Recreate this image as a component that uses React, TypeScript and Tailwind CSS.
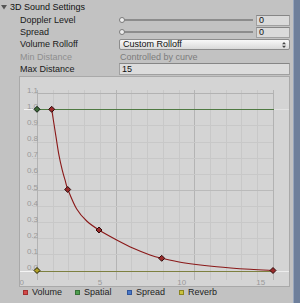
import React from "react";

const X = (d: number) => 17 + 15.73 * d;
const Y = (v: number) => 193.5 - 161.2 * v;

type P = [number, number];

const curvePage: P[] = [
  [51.7, 109.3],
  [55.9, 136.2],
  [59.0, 155.4],
  [62.2, 169.8],
  [65.3, 180.9],
  [67.7, 189],
  [76.7, 209],
  [86.7, 221],
  [99, 230],
  [116.7, 240],
  [133.3, 248.3],
  [150, 255],
  [161.7, 258.3],
  [183.3, 262.7],
  [216.7, 266.7],
  [250, 269.3],
  [273, 270.5],
];
const keysPage: P[] = [
  [51.7, 109.3],
  [67.7, 189.5],
  [99, 230],
  [161.7, 258.3],
  [273, 270.5],
];

const toSvg = (p: P): P => [p[0] - 20, p[1] - 77];

function catmull(pts: P[]) {
  let d = `M${pts[0][0].toFixed(2)},${pts[0][1].toFixed(2)}`;
  for (let i = 0; i < pts.length - 1; i++) {
    const p0 = pts[i - 1] || pts[i];
    const p1 = pts[i];
    const p2 = pts[i + 1];
    const p3 = pts[i + 2] || p2;
    const c1x = p1[0] + (p2[0] - p0[0]) / 6;
    const c1y = p1[1] + (p2[1] - p0[1]) / 6;
    const c2x = p2[0] - (p3[0] - p1[0]) / 6;
    const c2y = p2[1] - (p3[1] - p1[1]) / 6;
    d += ` C${c1x.toFixed(2)},${c1y.toFixed(2)} ${c2x.toFixed(2)},${c2y.toFixed(2)} ${p2[0].toFixed(2)},${p2[1].toFixed(2)}`;
  }
  return d;
}

function Diamond({ x, y, fill, stroke }: { x: number; y: number; fill: string; stroke: string }) {
  const r = 3;
  return (
    <polygon
      points={`${x},${y - r} ${x + r},${y} ${x},${y + r} ${x - r},${y}`}
      fill={fill}
      stroke={stroke}
      strokeWidth={1}
    />
  );
}

function NumberField({ value }: { value: string }) {
  return (
    <div className="ml-[3px] w-[34px] h-[11px] bg-[#dadada] border border-[#a0a0a0] border-t-[#868686] flex items-center pl-[2px] text-[9px] leading-none text-[#111]">
      {value}
    </div>
  );
}

function SliderRow({ label }: { label: string }) {
  return (
    <div className="h-[12px] flex items-center">
      <div className="w-[119px] pl-[20px] text-[9px] leading-none text-[#1a1a1a]">{label}</div>
      <div className="relative w-[134px] h-[12px]">
        <div className="absolute left-[3px] right-0 top-[5px] h-[2px] bg-[#8c8c8c]" />
        <div className="absolute left-0 top-[3px] w-[6px] h-[6px] rounded-full bg-[#ededed] border border-[#7a7a7a]" />
      </div>
      <NumberField value="0" />
    </div>
  );
}

function Chart() {
  const r = (v: number) => Math.round(v) + 0.5;
  const hLines = Array.from({ length: 12 }, (_, k) => k);
  const vLines = Array.from({ length: 16 }, (_, d) => d);
  const yLabels = ["0.0", "0.1", "0.2", "0.3", "0.4", "0.5", "0.6", "0.7", "0.8", "0.9", "1.0", "1.1"];
  const xLabels: [string, number][] = [
    ["0", 1.7],
    ["5", 80],
    ["10", 161.7],
    ["15", 240.7],
  ];
  const curve = catmull(curvePage.map(toSvg));
  const keys = keysPage.map(toSvg);
  const x0 = r(X(0));
  const x15 = r(X(15));
  const y0 = r(Y(0));
  const y1 = r(Y(1));
  const yTop = r(Y(1.1));
  return (
    <svg width="269" height="209" className="block" fontFamily="'Liberation Sans', Arial, sans-serif">
      {vLines.map((d) => (
        <line
          key={`v${d}`}
          x1={r(X(d))}
          x2={r(X(d))}
          y1={yTop - 4}
          y2={y0 + 8}
          stroke={d % 5 === 0 ? "#b4b4b4" : "#c8c8c8"}
          shapeRendering="crispEdges"
        />
      ))}
      {hLines.map((k) => (
        <line
          key={`h${k}`}
          x1={13}
          x2={x15}
          y1={r(Y(k / 10))}
          y2={r(Y(k / 10))}
          stroke={k % 5 === 0 ? "#bababa" : "#c8c8c8"}
          shapeRendering="crispEdges"
        />
      ))}
      <rect
        x={x0}
        y={yTop}
        width={x15 - x0}
        height={y0 - yTop}
        fill="none"
        stroke="#b2b2b2"
        shapeRendering="crispEdges"
      />
      {yLabels.map((t, k) => (
        <text key={t} x={18} y={Y(k / 10) - 0.3} fontSize="8" fill="#999999" textAnchor="end">
          {t}
        </text>
      ))}
      {xLabels.map(([t, x]) => (
        <text key={t} x={x} y={208} fontSize="8" fill="#999999" textAnchor="middle">
          {t}
        </text>
      ))}
      <line x1={4} x2={x0} y1={y1} y2={y1} stroke="#f4f4f4" shapeRendering="crispEdges" />
      <line x1={0} x2={x0} y1={y0} y2={y0} stroke="#f4f4f4" shapeRendering="crispEdges" />
      <line x1={x15} x2={269} y1={y1} y2={y1} stroke="#e2e2e2" shapeRendering="crispEdges" />
      <line x1={x15} x2={269} y1={y0} y2={y0} stroke="#ececec" shapeRendering="crispEdges" />
      <line x1={x0} x2={x15} y1={y0} y2={y0} stroke="#7d8040" shapeRendering="crispEdges" />
      <line x1={x0} x2={x15} y1={y1} y2={y1} stroke="#4f7a42" shapeRendering="crispEdges" />
      <path d={curve} fill="none" stroke="#8a1818" strokeWidth={1.1} />
      {keys.map(([x, y], i) => (
        <Diamond key={i} x={x} y={y} fill="#9a2a2a" stroke="#2e0c0c" />
      ))}
      <Diamond x={X(0)} y={Y(1)} fill="#3e6a3a" stroke="#122012" />
      <Diamond x={X(0)} y={Y(0)} fill="#b2a22a" stroke="#201c00" />
    </svg>
  );
}

function LegendItem({ color, border, label }: { color: string; border: string; label: string }) {
  return (
    <div className="w-[52px] flex items-center">
      <div className="w-[5px] h-[5px] border" style={{ backgroundColor: color, borderColor: border }} />
      <span className="ml-[4px] text-[9px] leading-none text-[#1e1e1e]">{label}</span>
    </div>
  );
}

export default function App() {
  return (
    <div className="w-[300px] h-[303px] bg-[#c2c2c2] flex overflow-hidden font-['Liberation_Sans',Arial,sans-serif]">
      <div className="w-[293px] flex flex-col">
        <div className="h-[14px] flex items-center pl-[1px]">
          <svg width="6" height="5" className="block">
            <path d="M0 0 L6 0 L3 4.5 Z" fill="#555" />
          </svg>
          <span className="ml-[3px] text-[9px] leading-none text-[#111]">3D Sound Settings</span>
        </div>
        <SliderRow label="Doppler Level" />
        <SliderRow label="Spread" />
        <div className="h-[13px] flex items-center">
          <div className="w-[119px] pl-[20px] text-[9px] leading-none text-[#1a1a1a]">Volume Rolloff</div>
          <div className="w-[171px] h-[11px] rounded-[2px] border border-[#8c8c8c] bg-linear-to-b from-[#f8f8f8] to-[#d9d9d9] flex items-center justify-between pl-[3px] pr-[3px]">
            <span className="text-[9px] leading-none text-[#111]">Custom Rolloff</span>
            <svg width="4" height="6" className="block">
              <path d="M0 2.2 L2 0 L4 2.2 Z M0 3.8 L2 6 L4 3.8 Z" fill="#444" />
            </svg>
          </div>
        </div>
        <div className="h-[12px] flex items-center">
          <div className="w-[119px] pl-[20px] text-[9px] leading-none text-[#8e8e8e]">Min Distance</div>
          <div className="pl-[1px] text-[9px] leading-none text-[#7c7c7c]">Controlled by curve</div>
        </div>
        <div className="h-[12px] flex items-center">
          <div className="w-[119px] pl-[20px] text-[9px] leading-none text-[#1a1a1a]">Max Distance</div>
          <div className="w-[171px] h-[12px] bg-[#dcdcdc] border border-[#a0a0a0] border-t-[#868686] flex items-center pl-[2px] text-[9px] leading-none text-[#111]">
            15
          </div>
        </div>
        <div className="mt-[1px] ml-[19px] w-[271px] h-[211px] border border-[#a9a9a9] bg-[#d4d4d4]">
          <Chart />
        </div>
        <div className="h-[10px] flex items-center pl-[23px]">
          <LegendItem color="#d24a4a" border="#a33030" label="Volume" />
          <LegendItem color="#4e9e4e" border="#367036" label="Spatial" />
          <LegendItem color="#4a78c8" border="#30559a" label="Spread" />
          <LegendItem color="#c9c23e" border="#8a8420" label="Reverb" />
        </div>
      </div>
      <div className="w-[7px] h-full bg-[#6e7f9b] border-l border-[#98a6bd]" />
    </div>
  );
}
